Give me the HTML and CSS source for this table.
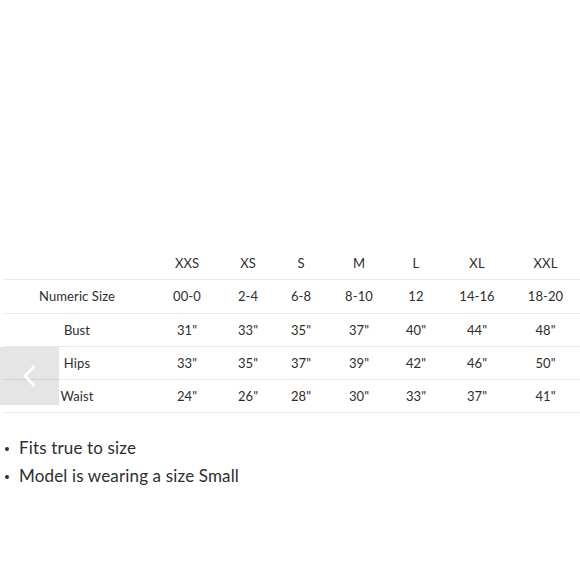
FILE: index.html
```html
<!DOCTYPE html>
<html>
<head>
<meta charset="utf-8">
<link rel="stylesheet" href="styles.css">
</head>
<body>
<div class="page">
  <div class="chart">
    <table class="sizes">
      <colgroup>
        <col class="c-label"><col class="c-xxs"><col class="c-xs"><col class="c-s"><col class="c-m"><col class="c-l"><col class="c-xl"><col class="c-xxl">
      </colgroup>
      <thead>
        <tr><th></th><th>XXS</th><th>XS</th><th>S</th><th>M</th><th>L</th><th>XL</th><th>XXL</th></tr>
      </thead>
      <tbody>
        <tr><td>Numeric Size</td><td>00-0</td><td>2-4</td><td>6-8</td><td>8-10</td><td>12</td><td>14-16</td><td>18-20</td></tr>
        <tr><td>Bust</td><td>31"</td><td>33"</td><td>35"</td><td>37"</td><td>40"</td><td>44"</td><td>48"</td></tr>
        <tr><td>Hips</td><td>33"</td><td>35"</td><td>37"</td><td>39"</td><td>42"</td><td>46"</td><td>50"</td></tr>
        <tr><td>Waist</td><td>24"</td><td>26"</td><td>28"</td><td>30"</td><td>33"</td><td>37"</td><td>41"</td></tr>
      </tbody>
    </table>
    <button class="prev" aria-label="Previous">
      <svg width="16" height="24" viewBox="0 0 16 24"><path d="M12.5 3 L4 12 L12.5 21" fill="none" stroke="#ffffff" stroke-width="2.8" stroke-linecap="square"/></svg>
    </button>
  </div>
  <ul class="notes">
    <li>Fits true to size</li>
    <li>Model is wearing a size Small</li>
  </ul>
</div>
</body>
</html>
```
FILE: styles.css
```css
html, body {
  margin: 0;
  padding: 0;
  background: #ffffff;
}
body {
  font-family: "Lato", "Open Sans", "Liberation Sans", sans-serif;
  color: #2e2e2e;
}
.page {
  width: 580px;
  height: 580px;
  padding-top: 247px;
  box-sizing: border-box;
}
.chart {
  position: relative;
  padding-left: 3px;
}
.sizes {
  border-collapse: collapse;
  table-layout: fixed;
  width: 577px;
  font-size: 13px;
  letter-spacing: 0.1px;
}
.c-label { width: 148px; }
.c-xxs { width: 72px; }
.c-xs { width: 50px; }
.c-s { width: 56px; }
.c-m { width: 60px; }
.c-l { width: 54px; }
.c-xl { width: 68px; }
.c-xxl { width: 69px; }
.sizes th, .sizes td {
  height: 32.3px;
  padding: 0;
  text-align: center;
  font-weight: 400;
  border-bottom: 1px solid #e9e9e9;
}
.prev {
  position: absolute;
  left: 0;
  top: 100px;
  width: 59px;
  height: 58px;
  border: none;
  padding: 0;
  background: rgba(0, 0, 0, 0.1);
  display: flex;
  align-items: center;
  justify-content: center;
}
.prev svg {
  margin-left: -2px;
}
.notes {
  list-style: none;
  margin: 21px 0 0;
  padding: 0;
  font-size: 17px;
  letter-spacing: 0.15px;
}
.notes li {
  position: relative;
  padding-left: 19px;
  height: 28px;
  line-height: 28px;
}
.notes li::before {
  content: "";
  position: absolute;
  left: 5px;
  top: 13px;
  width: 4px;
  height: 4px;
  border-radius: 50%;
  background: #2e2e2e;
}
```
